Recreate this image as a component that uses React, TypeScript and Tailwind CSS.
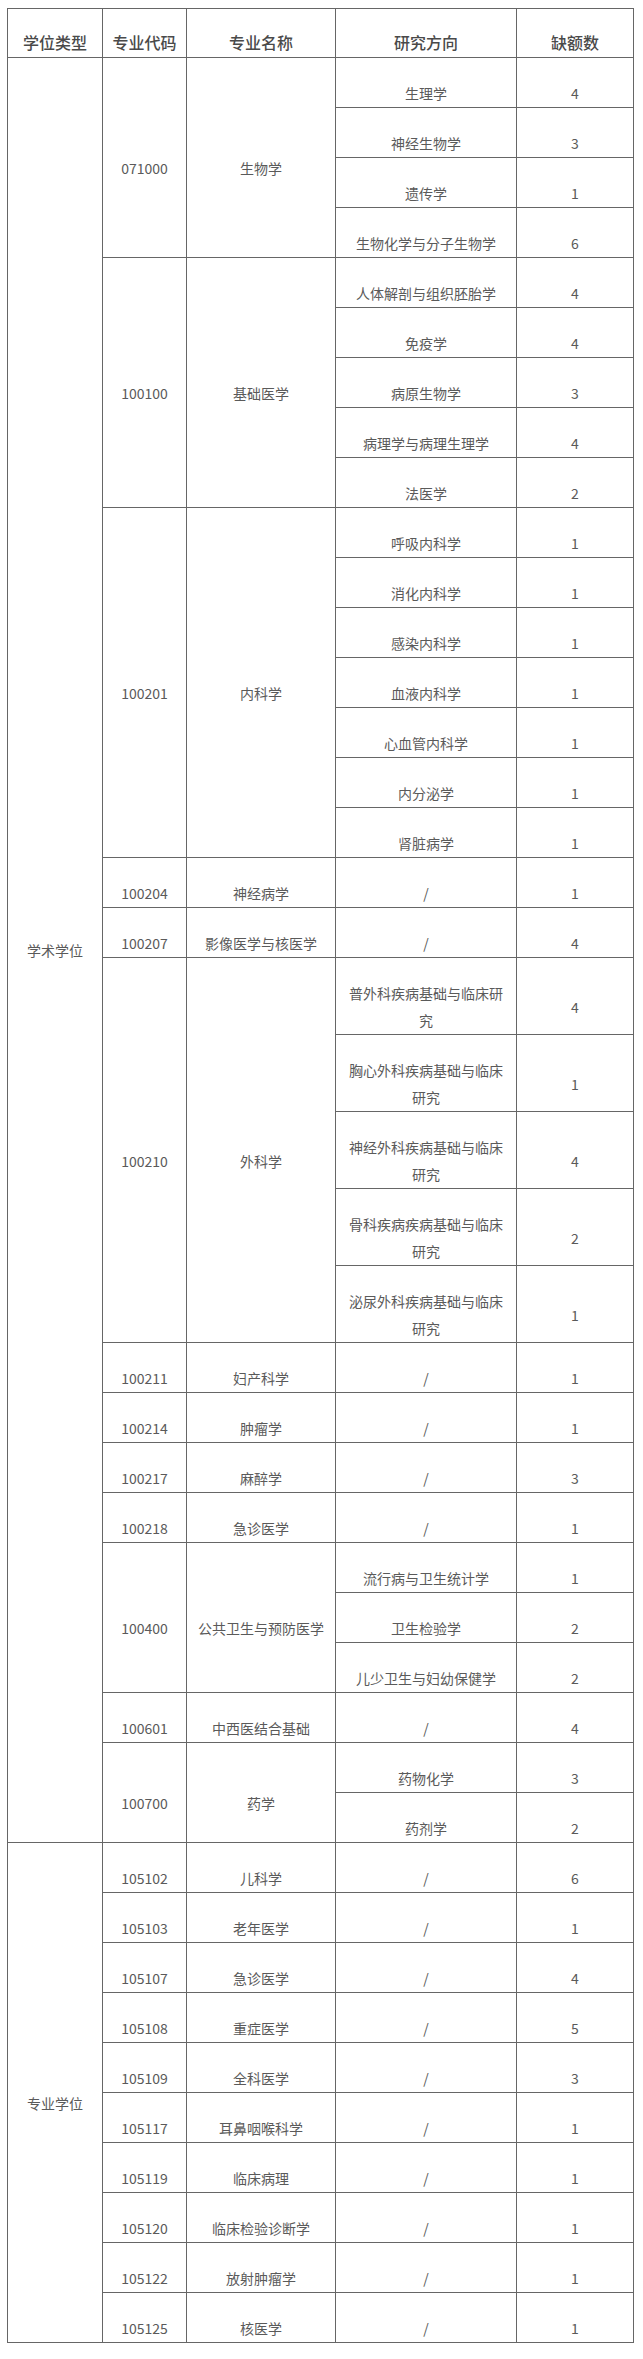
import React from "react";

type Group = { code: string; name: string; dirs: [string, number][] };

const academic: Group[] = [
  { code: "071000", name: "生物学", dirs: [["生理学", 4], ["神经生物学", 3], ["遗传学", 1], ["生物化学与分子生物学", 6]] },
  { code: "100100", name: "基础医学", dirs: [["人体解剖与组织胚胎学", 4], ["免疫学", 4], ["病原生物学", 3], ["病理学与病理生理学", 4], ["法医学", 2]] },
  { code: "100201", name: "内科学", dirs: [["呼吸内科学", 1], ["消化内科学", 1], ["感染内科学", 1], ["血液内科学", 1], ["心血管内科学", 1], ["内分泌学", 1], ["肾脏病学", 1]] },
  { code: "100204", name: "神经病学", dirs: [["/", 1]] },
  { code: "100207", name: "影像医学与核医学", dirs: [["/", 4]] },
  { code: "100210", name: "外科学", dirs: [["普外科疾病基础与临床研究", 4], ["胸心外科疾病基础与临床研究", 1], ["神经外科疾病基础与临床研究", 4], ["骨科疾病疾病基础与临床研究", 2], ["泌尿外科疾病基础与临床研究", 1]] },
  { code: "100211", name: "妇产科学", dirs: [["/", 1]] },
  { code: "100214", name: "肿瘤学", dirs: [["/", 1]] },
  { code: "100217", name: "麻醉学", dirs: [["/", 3]] },
  { code: "100218", name: "急诊医学", dirs: [["/", 1]] },
  { code: "100400", name: "公共卫生与预防医学", dirs: [["流行病与卫生统计学", 1], ["卫生检验学", 2], ["儿少卫生与妇幼保健学", 2]] },
  { code: "100601", name: "中西医结合基础", dirs: [["/", 4]] },
  { code: "100700", name: "药学", dirs: [["药物化学", 3], ["药剂学", 2]] },
];

const professional: Group[] = [
  { code: "105102", name: "儿科学", dirs: [["/", 6]] },
  { code: "105103", name: "老年医学", dirs: [["/", 1]] },
  { code: "105107", name: "急诊医学", dirs: [["/", 4]] },
  { code: "105108", name: "重症医学", dirs: [["/", 5]] },
  { code: "105109", name: "全科医学", dirs: [["/", 3]] },
  { code: "105117", name: "耳鼻咽喉科学", dirs: [["/", 1]] },
  { code: "105119", name: "临床病理", dirs: [["/", 1]] },
  { code: "105120", name: "临床检验诊断学", dirs: [["/", 1]] },
  { code: "105122", name: "放射肿瘤学", dirs: [["/", 1]] },
  { code: "105125", name: "核医学", dirs: [["/", 1]] },
];

const cell =
  "border border-[#666666] text-center align-middle pt-[22px] pb-0 px-[9px] leading-[27px] text-[14px] text-[#5a5a5a]";
const th =
  "border border-[#666666] text-center align-middle pt-[20px] pb-[1px] px-[4px] leading-[27px] text-[16px] font-medium text-[#4a4a4a]";

function Section({ label, groups, padTop }: { label: string; groups: Group[]; padTop: boolean }) {
  const total = groups.reduce((s, g) => s + g.dirs.length, 0);
  const rows: React.ReactNode[] = [];
  groups.forEach((g, gi) => {
    g.dirs.forEach(([dir, n], di) => {
      rows.push(
        <tr key={`${g.code}-${di}`}>
          {gi === 0 && di === 0 && (
            <td
              rowSpan={total}
              className={
                padTop
                  ? cell
                  : "border border-[#666666] text-center align-middle p-0 px-[9px] leading-[27px] text-[14px] text-[#5a5a5a]"
              }
            >
              {label}
            </td>
          )}
          {di === 0 && (
            <>
              <td rowSpan={g.dirs.length} className={cell}>
                {g.code}
              </td>
              <td rowSpan={g.dirs.length} className={cell}>
                {g.name}
              </td>
            </>
          )}
          <td className={cell}>{dir}</td>
          <td className={cell}>{n}</td>
        </tr>
      );
    });
  });
  return <>{rows}</>;
}

export default function App() {
  return (
    <div className="bg-white pl-[7px] pt-[8px] pb-[16px] font-['Noto_Sans_CJK_SC','Noto_Sans',sans-serif]">
      <table className="table-fixed border-collapse w-[626px]">
        <colgroup>
          <col className="w-[95px]" />
          <col className="w-[84px]" />
          <col className="w-[149px]" />
          <col className="w-[181px]" />
          <col className="w-[117px]" />
        </colgroup>
        <thead>
          <tr>
            <th className={th}>学位类型</th>
            <th className={th}>专业代码</th>
            <th className={th}>专业名称</th>
            <th className={th}>研究方向</th>
            <th className={th}>缺额数</th>
          </tr>
        </thead>
        <tbody>
          <Section label="学术学位" groups={academic} padTop={false} />
          <Section label="专业学位" groups={professional} padTop={true} />
        </tbody>
      </table>
    </div>
  );
}
